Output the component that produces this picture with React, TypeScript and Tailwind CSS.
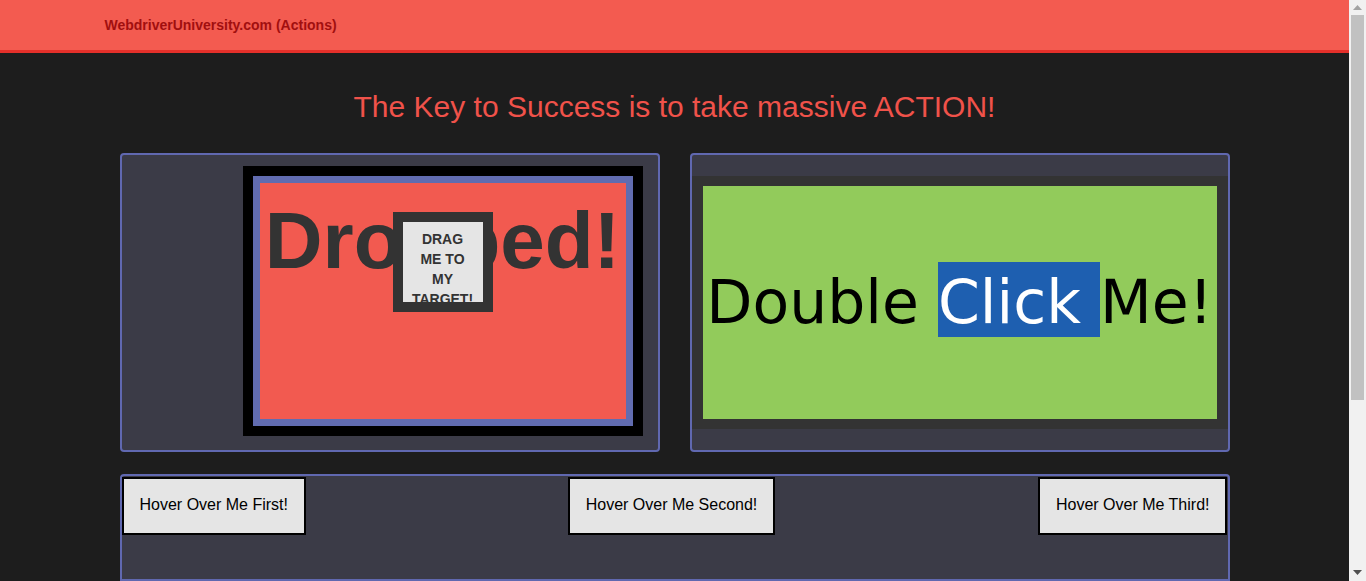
const sans = "font-['Liberation_Sans',Arial,sans-serif]";

function Scrollbar() {
  return (
    <div className="flex h-full w-[17px] shrink-0 flex-col items-center bg-[#f1f1f1]">
      <div className="flex h-[15px] w-full items-center justify-center">
        <svg width="9" height="5" viewBox="0 0 9 5" aria-hidden="true">
          <path d="M0 5 L4.5 0 L9 5 Z" fill="#a3a3a3" />
        </svg>
      </div>
      <div className="h-[385px] w-[13px] bg-[#c1c1c1]" />
      <div className="flex-1" />
      <div className="flex h-[17px] w-full items-center justify-center">
        <svg width="9" height="5" viewBox="0 0 9 5" aria-hidden="true">
          <path d="M0 0 L9 0 L4.5 5 Z" fill="#505050" />
        </svg>
      </div>
    </div>
  );
}

function HoverButton({ label }: { label: string }) {
  return (
    <button className={`${sans} flex h-[58px] items-center border-2 border-black bg-[#e5e5e5] px-4 pb-[2px] text-[16px] text-black`}>
      {label}
    </button>
  );
}

export default function App() {
  return (
    <div className="flex h-[581px] w-[1366px] overflow-hidden bg-[#1d1d1d]">
      <div className="flex min-w-0 flex-1 flex-col">
        <nav className="h-[53px] shrink-0 border-b-[3px] border-[#e5302a] bg-[#f35b50]">
          <div className="mx-auto w-[1170px] px-[15px]">
            <span className={`${sans} block pt-[15px] text-[14px] font-bold leading-[20px] text-[#a10f0f]`}>
              WebdriverUniversity.com (Actions)
            </span>
          </div>
        </nav>

        <div className="mx-auto w-[1170px] px-[15px]">
          <h2 className={`${sans} mt-[37px] text-center text-[30px] leading-[33px] text-[#f0524a]`}>
            The Key to Success is to take massive ACTION!
          </h2>

          <div className="mt-[30px] grid grid-cols-2 gap-[30px] px-[15px]">
            {/* drag and drop */}
            <div className="flex h-[299px] justify-end rounded-[4px] border-2 border-[#6068b0] bg-[#3b3b47] pr-[15px] pt-[11px]">
              <div className="h-[270px] w-[400px] bg-black p-[10px]">
                <div className="relative h-full border-[7px] border-[#616cb0] bg-[#f25a50]">
                  <h1 className={`${sans} pt-[14px] text-center text-[80px] font-bold leading-[88px] text-[#333333]`}>
                    Dropped!
                  </h1>
                  <div className={`${sans} absolute left-[133px] top-[29px] h-[100px] w-[100px] overflow-hidden border-[10px] border-[#333333] bg-[#e5e5e5] pt-[7px] text-center text-[14px] font-bold leading-[20px] text-[#333333]`}>
                    DRAG
                    <br />
                    ME TO
                    <br />
                    MY
                    <br />
                    TARGET!
                  </div>
                </div>
              </div>
            </div>

            {/* double click */}
            <div className="h-[299px] rounded-[4px] border-2 border-[#6068b0] bg-[#3b3b47] pt-[21px]">
              <div className="h-[253px] bg-[#333333] py-[10px] pl-[11px] pr-[11px]">
                <div className="flex h-full items-center justify-center whitespace-nowrap bg-[#92cb5b] font-['DejaVu_Sans',Verdana,sans-serif] text-[60px] leading-[73px] text-black">
                  <p>
                    Double <span className="bg-[#1e5fb0] pt-[5px] text-white">Click </span>Me!
                  </p>
                </div>
              </div>
            </div>
          </div>

          {/* hover menus */}
          <div className="mx-[15px] mt-[22px] grid h-[107px] grid-cols-3 items-start rounded-t-[4px] border-2 border-[#6068b0] bg-[#3b3b47] pt-[1px]">
            <div className="justify-self-start">
              <HoverButton label="Hover Over Me First!" />
            </div>
            <div className="mr-[6px] justify-self-center">
              <HoverButton label="Hover Over Me Second!" />
            </div>
            <div className="justify-self-end">
              <HoverButton label="Hover Over Me Third!" />
            </div>
          </div>
        </div>
      </div>
      <Scrollbar />
    </div>
  );
}
